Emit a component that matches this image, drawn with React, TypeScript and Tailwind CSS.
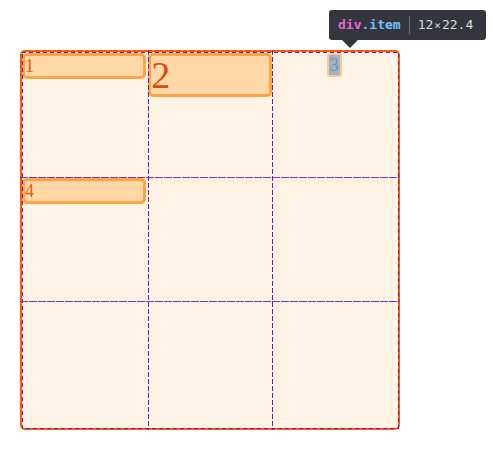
import React from 'react';

const serif = { fontFamily: '"Liberation Serif", "Times New Roman", serif' };
const mono = { fontFamily: '"DejaVu Sans Mono", "Liberation Mono", monospace' };

function GridOverlay() {
  const c = '#6a1f9e';
  return (
    <svg
      className="absolute left-[-2px] top-[-2px] pointer-events-none"
      width="380"
      height="380"
      shapeRendering="crispEdges"
    >
      {/* outline */}
      <rect x="2" y="2" width="376" height="376" fill="none" stroke={c} strokeWidth="1" strokeDasharray="4 3" />
      {/* columns */}
      <line x1="128" y1="0" x2="128" y2="380" stroke={c} strokeWidth="1" strokeDasharray="5 2" />
      <line x1="252" y1="0" x2="252" y2="380" stroke={c} strokeWidth="1" strokeDasharray="5 2" />
      {/* rows */}
      <line x1="0" y1="127" x2="380" y2="127" stroke="#7a35b8" strokeWidth="1" strokeDasharray="8 1" />
      <line x1="0" y1="251" x2="380" y2="251" stroke="#7a35b8" strokeWidth="1" strokeDasharray="8 1" />
    </svg>
  );
}

export default function App() {
  return (
    <div className="relative w-[493px] h-[449px] bg-white pl-[20px] pt-[50px]">
      <div className="relative w-[380px] h-[380px] border-2 border-[#fb5a10] rounded-[5px] bg-[#fff3e6] grid grid-cols-3 grid-rows-3 items-start">
        <div
          className="border-[3px] border-[#ffa444] bg-[#ffd8a8] rounded-[5px] text-[18px] leading-[20px] text-[#e8590c] mt-[1px] mr-[1px]"
          style={serif}
        >
          1
        </div>
        <div
          className="border-[3px] border-[#ffa444] bg-[#ffd8a8] rounded-[5px] text-[38px] leading-[38px] text-[#d9480f] mx-[1px] mt-[1px]"
          style={serif}
        >
          2
        </div>
        <div
          className="justify-self-center ml-[-2px] mt-[1px] border-2 border-[#ffc98a] rounded-[3px] bg-[#9fb3cc] text-[18px] leading-[20px] text-[#7d8fa8] px-[1px]"
          style={serif}
        >
          3
        </div>
        <div
          className="col-start-1 row-start-2 border-[3px] border-[#ffa444] bg-[#ffd8a8] rounded-[5px] text-[18px] leading-[20px] text-[#e8590c] mt-[1px] mr-[1px]"
          style={serif}
        >
          4
        </div>
        <GridOverlay />
      </div>

      {/* infobar tooltip */}
      <div className="absolute left-[329px] top-[10px]">
        <div
          className="h-[30px] w-[157px] rounded-[3px] bg-[#33363d] flex items-center px-[9px] text-[13px] font-semibold"
          style={mono}
        >
          <span className="text-[#e36ad6]">div</span>
          <span className="text-[#75bfff]">.item</span>
          <span className="mx-[8px] h-[18px] w-px bg-[#6b6e75]" />
          <span className="text-[#dcdcdc] font-normal">
            12<span className="text-[11px] mx-[1px]">×</span>22.4
          </span>
        </div>
        <div className="ml-[13px] w-0 h-0 border-l-[8px] border-r-[8px] border-t-[8px] border-l-transparent border-r-transparent border-t-[#33363d]" />
      </div>
    </div>
  );
}
